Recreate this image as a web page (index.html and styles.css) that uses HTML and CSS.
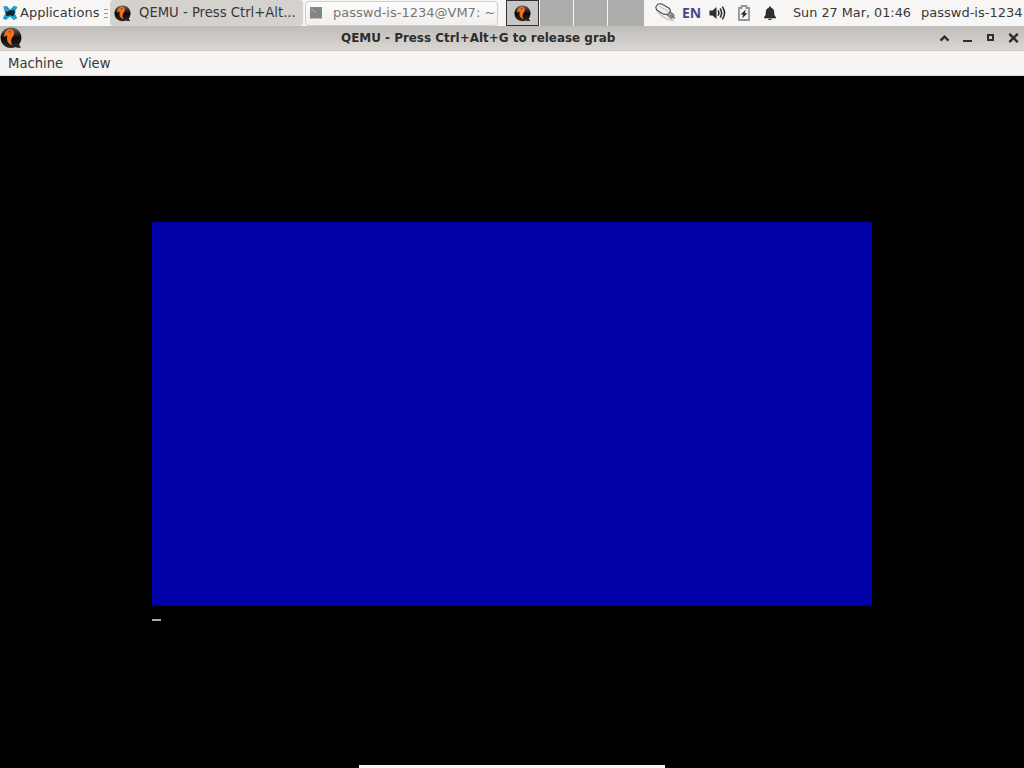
FILE: index.html
```
<!DOCTYPE html>
<html lang="en">
<head>
  <meta charset="UTF-8" />
  <meta name="viewport" content="width=device-width, initial-scale=1.0"/>
  <title>QEMU - Press Ctrl+Alt+G to release grab</title>
  <link rel="stylesheet" href="styles.css">
</head>
<body>

  <!-- shared QEMU logo -->
  <svg class="defs" width="0" height="0">
    <defs>
      <linearGradient id="shine" x1="0" y1="0" x2="0" y2="1">
        <stop offset="0" stop-color="#6a6560"/>
        <stop offset="0.5" stop-color="#0a0a0a"/>
        <stop offset="1" stop-color="#2c2a28"/>
      </linearGradient>
      <symbol id="qemu" viewBox="0 0 22 22">
        <path fill="url(#shine)" d="M11 0.5C17 0.5 21.4 5 21.4 10.7C21.4 13.4 20.5 15.7 19 17.5L21 20.8H16.8L15.8 20C14.3 20.7 12.7 21 11 21C5 21 0.6 16.5 0.6 10.7S5 0.5 11 0.5Z"/>
        <path fill="#f0701f" d="M6.2 4C8.5 1.4 13 1.8 14 4.8C14.8 7.7 12.8 9.4 11.6 11.8C10.7 13.8 11 16.2 12.4 18.6C8.6 17 6.7 14.4 7 11.6C7.1 10 7.6 8.9 6.9 8.5C6 8.1 5.2 9 4.2 10.4C3.8 8 4.4 5.6 6.2 4Z"/>
        <circle cx="9.8" cy="4.8" r="0.8" fill="#5b3420"/>
      </symbol>
    </defs>
  </svg>

  <div class="panel">
    <div class="apps-menu">
      <svg width="16" height="16" viewBox="0 0 16 16">
        <path fill="#209fd0" d="M1 1.5L5 1L8 4.5L12 0.8L15.5 2L12.6 7.5L15.3 13.5L11.5 15L8 11.5L4 15L0.8 13.8L3.4 8Z"/>
        <path fill="#14212b" d="M2.5 6.2L4.6 7L8.5 5.1L10.2 5.5L11.7 4.4L12 5.8L13.7 6.9L12.5 8.5L11.2 11H9.7L8.8 10L6 11H4.4L4.2 8.5Z"/>
      </svg>
      <span class="apps-label">Applications</span>
      <div class="grip"><i></i><i></i><i></i></div>
    </div>

    <div class="task active">
      <svg width="17" height="17"><use href="#qemu"/></svg>
      <span>QEMU - Press Ctrl+Alt...</span>
    </div>
    <div class="task minimized">
      <svg width="12" height="12" viewBox="0 0 12 12">
        <rect width="12" height="11.5" fill="#858585"/>
        <path d="M1.5 2L3 3L1.5 4M4 4.5H6" fill="none" stroke="#b9b9b9" stroke-width="0.8"/>
      </svg>
      <span>passwd-is-1234@VM7: ~</span>
    </div>

    <div class="pager">
      <div class="workspace current">
        <svg width="17" height="17"><use href="#qemu"/></svg>
      </div>
      <div class="workspace"></div>
      <div class="workspace"></div>
      <div class="workspace"></div>
    </div>

    <div class="tray">
      <svg class="plug" width="22" height="20" viewBox="0 0 22 20">
        <path d="M3 9L8 14L13 16.5L19 17.5" fill="none" stroke="#aaa" stroke-width="2" opacity="0.5"/>
        <path d="M0.8 4L3 1L6.5 0.8L14.5 5.5L15.5 8.2L12.5 11.6L8.5 11.2L1.6 7Z" fill="#f1f1f0" stroke="#555" stroke-width="1.2"/>
        <path d="M4 3L13 8.3" stroke="#bbb" stroke-width="1"/>
        <path d="M12 11.8L15.4 9L19 11.7L18.6 14.4L15.8 15.4Z" fill="#999" stroke="#666"/>
        <path d="M16 12L20 15.5" stroke="#777" stroke-width="1.5"/>
      </svg>
      <span class="lang">EN</span>
      <svg class="volume" width="17" height="16" viewBox="0 0 17 16">
        <path d="M0.5 5.5H3.5L7.5 2V14L3.5 10.5H0.5Z" fill="#2b2f31"/>
        <path d="M9 5.4Q10.8 8 9 10.6M11.2 3.5Q14 8 11.2 12.5M13.3 1.6Q17.8 8 13.3 14.4" fill="none" stroke="#2b2f31" stroke-width="1.6"/>
      </svg>
      <svg class="battery" width="12" height="16" viewBox="0 0 12 16">
        <path d="M1 3H3.5V1H8.5V3H11V15H1Z" fill="#f4f4f4" stroke="#929595" stroke-width="1.8"/>
        <path d="M7.8 4.5L2.6 9.4H5.3L4.2 13.2L9.5 8.3H6.8Z" fill="#202426"/>
      </svg>
      <svg class="bell" width="14" height="15" viewBox="0 0 14 15">
        <path d="M7 0.5C7.8 0.5 8.2 1 8.2 1.7C10.4 2.3 11.2 4 11.2 6.3C11.2 9 11.7 9.9 13 11.2V12.2H1V11.2C2.3 9.9 2.8 9 2.8 6.3C2.8 4 3.6 2.3 5.8 1.7C5.8 1 6.2 0.5 7 0.5ZM5 12.8H9C8.7 14.5 5.3 14.5 5 12.8Z" fill="#2b2f31"/>
      </svg>
    </div>

    <span class="clock">Sun 27 Mar, 01:46</span>
    <span class="user">passwd-is-1234</span>
  </div>

  <div class="titlebar">
    <svg class="window-icon" width="22" height="22"><use href="#qemu"/></svg>
    <span class="title">QEMU - Press Ctrl+Alt+G to release grab</span>
    <div class="window-buttons">
      <svg width="11" height="11" viewBox="0 0 11 11"><path d="M1.5 7.7L5.5 3.7L9.5 7.7" fill="none" stroke="#2d2d2d" stroke-width="2.4"/></svg>
      <svg width="11" height="11" viewBox="0 0 11 11"><path d="M1 8H10" stroke="#2d2d2d" stroke-width="2"/></svg>
      <svg width="11" height="11" viewBox="0 0 11 11"><rect x="3" y="2" width="5" height="5" fill="none" stroke="#2d2d2d" stroke-width="2"/></svg>
      <svg width="11" height="11" viewBox="0 0 11 11"><path d="M1.3 0.8L9.7 9.2M9.7 0.8L1.3 9.2" stroke="#2d2d2d" stroke-width="2.4"/></svg>
    </div>
  </div>

  <div class="menubar">
    <span>Machine</span>
    <span>View</span>
  </div>

  <div class="display">
    <div class="console">
      <div class="screen"></div>
      <div class="cursor"></div>
    </div>
    <div class="dock"></div>
  </div>

</body>
</html>
```
FILE: styles.css
```
* { box-sizing: border-box; margin: 0; padding: 0; }
body {
  height: 100vh;
  display: flex;
  flex-direction: column;
  overflow: hidden;
  background: #000;
  color: #36393a;
  font-family: "DejaVu Sans", sans-serif;
  font-size: 13px;
  white-space: nowrap;
}
svg { display: block; flex: none; }
.defs { position: absolute; }

/* Top panel */
.panel {
  display: flex;
  align-items: center;
  height: 26px;
  flex: none;
  background: #f7f6f5;
}
.panel span { padding-bottom: 2px; }
.apps-menu {
  display: flex;
  align-items: center;
  width: 110px;
  padding-left: 2px;
}
.apps-label { width: 80px; margin-left: 2px; }
.grip {
  display: flex;
  flex-direction: column;
  gap: 3px;
  margin-left: 4px;
}
.grip i {
  width: 4px;
  height: 1px;
  background: #999;
}
.task {
  display: flex;
  align-items: center;
  height: 26px;
}
.task.active {
  width: 193px;
  padding-left: 4px;
  gap: 8px;
  font-size: 13.2px;
  background: #d5d1cd;
  border-radius: 4px;
}
.task.minimized {
  width: 193px;
  height: 25px;
  margin-left: 2px;
  padding-left: 4px;
  gap: 11px;
  color: #777;
  background: linear-gradient(#fcfcfb, #f0efed);
  border: 1px solid #d2cfcc;
  border-radius: 4px;
}
.pager {
  display: flex;
  gap: 1px;
  width: 138px;
  height: 26px;
  margin-left: 8px;
}
.workspace {
  width: 33px;
  background: #adadac;
}
.workspace:last-child { flex: 1; }
.workspace.current {
  display: flex;
  align-items: center;
  justify-content: center;
  background: #c8c7c5;
  border: 1px solid #333;
}
.tray {
  display: flex;
  align-items: center;
  width: 149px;
  padding-left: 11px;
}
.lang {
  width: 18px;
  margin-left: 5px;
  color: #45498a;
  font-family: "Noto Sans", sans-serif;
  font-size: 14px;
  font-weight: bold;
}
.volume { margin-left: 9px; }
.battery { margin-left: 12px; }
.bell { margin-left: 13px; }
.clock {
  width: 128px;
  font-size: 12.8px;
}

/* QEMU window */
.titlebar {
  display: flex;
  align-items: center;
  height: 25px;
  flex: none;
  background: linear-gradient(#bfbcb9, #dad6d2);
  border-bottom: 1px solid #cbc7c3;
}
.title {
  flex: 1;
  padding: 0 0 1px 319px;
  color: #2d2d2d;
  font-size: 11.95px;
  font-weight: bold;
}
.window-buttons {
  display: flex;
  gap: 12px;
  padding-right: 5px;
}
.menubar {
  display: flex;
  align-items: center;
  gap: 16px;
  height: 25px;
  flex: none;
  padding: 1px 0 0 8px;
  font-size: 13.2px;
  background: #f6f5f4;
  border-bottom: 1px solid #dedcda;
}

/* Guest display */
.display {
  flex: 1;
  display: flex;
  flex-direction: column;
  align-items: center;
  justify-content: space-between;
  background: #000;
}
.console {
  width: 720px;
  padding-top: 146px;
}
.screen {
  height: 384px;
  background: #0000a8;
}
.cursor {
  width: 9px;
  height: 2px;
  margin-top: 13px;
  background: #a8a8a8;
}
.dock {
  width: 306px;
  height: 3px;
  background: #f6f5f4;
}
```
